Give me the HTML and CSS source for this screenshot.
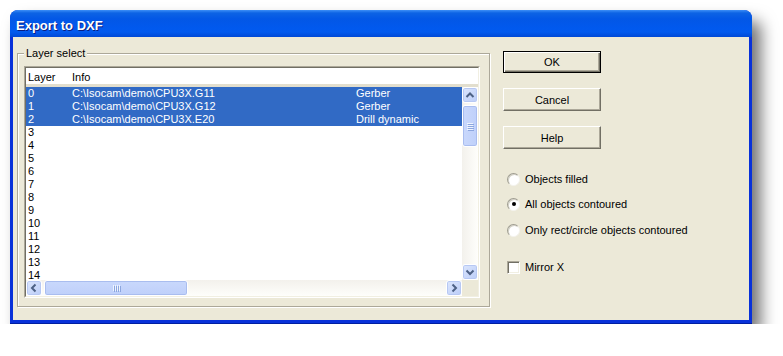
FILE: index.html
```html
<!DOCTYPE html>
<html>
<head>
<meta charset="utf-8">
<link rel="stylesheet" href="styles.css">
</head>
<body>
<div class="window">
  <div class="titlebar"><span class="title">Export to DXF</span></div>
  <div class="client">
    <div class="group">
      <span class="legend">Layer select</span>
      <div class="list">
        <div class="list-inner">
          <div class="header">
            <span class="c1">Layer</span><span class="c2">Info</span>
          </div>
          <div class="body">
            <div class="rows-wrap">
              <div class="rows">
                <div class="row sel"><span class="c1">0</span><span class="c2">C:\Isocam\demo\CPU3X.G11</span><span class="c3">Gerber</span></div>
                <div class="row sel"><span class="c1">1</span><span class="c2">C:\Isocam\demo\CPU3X.G12</span><span class="c3">Gerber</span></div>
                <div class="row sel"><span class="c1">2</span><span class="c2">C:\Isocam\demo\CPU3X.E20</span><span class="c3">Drill dynamic</span></div>
                <div class="row"><span class="c1">3</span></div>
                <div class="row"><span class="c1">4</span></div>
                <div class="row"><span class="c1">5</span></div>
                <div class="row"><span class="c1">6</span></div>
                <div class="row"><span class="c1">7</span></div>
                <div class="row"><span class="c1">8</span></div>
                <div class="row"><span class="c1">9</span></div>
                <div class="row"><span class="c1">10</span></div>
                <div class="row"><span class="c1">11</span></div>
                <div class="row"><span class="c1">12</span></div>
                <div class="row"><span class="c1">13</span></div>
                <div class="row"><span class="c1">14</span></div>
              </div>
              <div class="vscroll">
                <div class="sbtn"><svg width="14" height="14" viewBox="0 0 14 14"><polyline points="3.5,9 7,5.5 10.5,9" fill="none" stroke="#4D6185" stroke-width="2"/></svg></div>
                <div class="vthumb"><span class="grip-h"></span><span class="grip-h"></span><span class="grip-h"></span><span class="grip-h"></span></div>
                <div class="track"></div>
                <div class="sbtn"><svg width="14" height="14" viewBox="0 0 14 14"><polyline points="3.5,5.5 7,9 10.5,5.5" fill="none" stroke="#4D6185" stroke-width="2"/></svg></div>
              </div>
            </div>
            <div class="hscroll">
              <div class="sbtn"><svg width="14" height="14" viewBox="0 0 14 14"><polyline points="8.5,3.5 5,7 8.5,10.5" fill="none" stroke="#4D6185" stroke-width="2"/></svg></div>
              <div class="hthumb"><span class="grip-v"></span><span class="grip-v"></span><span class="grip-v"></span><span class="grip-v"></span></div>
              <div class="track"></div>
              <div class="sbtn"><svg width="14" height="14" viewBox="0 0 14 14"><polyline points="5.5,3.5 9,7 5.5,10.5" fill="none" stroke="#4D6185" stroke-width="2"/></svg></div>
              <div class="corner"></div>
            </div>
          </div>
        </div>
      </div>
    </div>
    <div class="side">
      <div class="btn default">OK</div>
      <div class="btn cancel">Cancel</div>
      <div class="btn help">Help</div>
      <div class="opt r1"><span class="radio"></span><span>Objects filled</span></div>
      <div class="opt r2"><span class="radio on"><span class="dot"></span></span><span>All objects contoured</span></div>
      <div class="opt r3"><span class="radio"></span><span>Only rect/circle objects contoured</span></div>
      <div class="opt cb"><span class="check"></span><span>Mirror X</span></div>
    </div>
  </div>
</div>
</body>
</html>
```

FILE: styles.css
```css
* { box-sizing: border-box; }
html, body { margin: 0; padding: 0; background: #ffffff; }
body {
  font-family: "Liberation Sans", Arial, sans-serif;
  font-size: 11px;
  color: #000;
}
.window {
  margin: 10px 0 0 10px;
  width: 742px;
  height: 314px;
  background: #0831D9;
  border-radius: 8px 8px 0 0;
  padding: 0 3px 3px 3px;
  box-shadow: 9px 11px 16px rgba(0,0,0,0.55);
  border-bottom: 1px solid #001EA0;
}
.titlebar {
  height: 27px;
  margin: 0 -3px;
  border-radius: 8px 8px 0 0;
  background: linear-gradient(#3D8FF7 0px, #0D63E4 3px, #0357E6 9px, #0159EE 18px, #025AEE 22px, #0049D6 27px);
  display: flex;
  align-items: center;
  padding: 3px 0 0 6px;
}
.title {
  color: #fff;
  font-weight: bold;
  font-size: 13px;
  text-shadow: 1px 1px #0A1E80;
}
.client {
  background: #ECE9D8;
  height: 283px;
  display: flex;
  align-items: flex-start;
}
.group {
  position: relative;
  margin: 16px 0 0 4px;
  width: 473px;
  height: 254px;
  border: 1px solid #ACA899;
  box-shadow: inset 1px 1px #fff, 1px 1px #fff;
  padding: 12px 10px 9px 6px;
}
.legend {
  position: absolute;
  left: 6px;
  top: -8px;
  background: #ECE9D8;
  padding: 0 2px;
  line-height: 14px;
}
.list {
  width: 456px;
  height: 232px;
  border: 1px solid;
  border-color: #ACA899 #fff #fff #ACA899;
}
.list-inner {
  width: 100%;
  height: 100%;
  border: 1px solid;
  border-color: #716F64 #F1EFE2 #F1EFE2 #716F64;
  background: #fff;
  display: flex;
  flex-direction: column;
}
.header {
  height: 19px;
  display: flex;
  align-items: center;
  background: #fff;
  border-bottom: 3px solid;
  border-image: linear-gradient(#F1EFE2, #E2DECD) 1;
  padding-top: 1px;
}
.c1 { width: 46px; padding-left: 2px; flex: none; }
.c2 { width: 284px; flex: none; }
.c3 { flex: 1; }
.body { flex: 1; display: flex; flex-direction: column; }
.rows-wrap { flex: 1; display: flex; overflow: hidden; }
.rows { flex: 1; overflow: hidden; height: 193px; }
.row {
  height: 13px;
  line-height: 12px;
  display: flex;
  white-space: nowrap;
}
.row.sel { background: #316AC5; color: #fff; }
.vscroll {
  width: 16px;
  display: flex;
  flex-direction: column;
  background: linear-gradient(90deg, #F3F1EC, #FEFEFB);
}
.hscroll {
  height: 16px;
  display: flex;
  background: linear-gradient(#F3F1EC, #FEFEFB);
}
.track { flex: 1; }
.sbtn {
  width: 16px;
  height: 16px;
  flex: none;
  border: 1px solid #fff;
  border-radius: 3px;
  background: linear-gradient(135deg, #DCE6FD, #BBCDF8);
  box-shadow: inset 0 0 0 1px #B7C8F3;
  display: flex;
  align-items: center;
  justify-content: center;
}
.vthumb, .hthumb {
  flex: none;
  border: 1px solid #fff;
  border-radius: 3px;
  background: linear-gradient(90deg, #C9D8FC, #BFD0FA);
  box-shadow: inset 0 0 0 1px #A9BDEF;
  display: flex;
  align-items: center;
  justify-content: center;
}
.vthumb { height: 42px; margin-top: 2px; flex-direction: column; gap: 1px; }
.hthumb { width: 144px; margin-left: 2px; gap: 1px; background: linear-gradient(#C9D8FC, #BFD0FA); }
.grip-h { display: block; width: 6px; height: 1px; background: #EEF4FE; box-shadow: 1px 1px #8CA6DF; }
.grip-v { display: block; width: 1px; height: 6px; background: #EEF4FE; box-shadow: 1px 1px #8CA6DF; }
.corner { width: 16px; height: 16px; background: #ECE9D8; flex: none; }
.side {
  margin-left: 13px;
  display: flex;
  flex-direction: column;
}
.btn {
  width: 98px;
  height: 22px;
  display: flex;
  align-items: center;
  justify-content: center;
  background: #ECE9D8;
  border: 1px solid;
  border-color: #fff #716F64 #716F64 #fff;
  box-shadow: inset -1px -1px #ACA899;
}
.btn.default {
  margin-top: 14px;
  border: 1px solid #000;
  box-shadow: inset 1px 1px #fff, inset -1px -1px #716F64, inset -2px -2px #ACA899;
}
.btn.cancel { margin-top: 15px; height: 23px; }
.btn.help { margin-top: 15px; height: 23px; }
.opt {
  display: flex;
  align-items: center;
  height: 14px;
  padding-left: 4px;
  gap: 5px;
}
.r1 { margin-top: 23px; }
.r2 { margin-top: 11px; }
.r3 { margin-top: 12px; }
.cb { margin-top: 23px; }
.radio {
  width: 13px;
  height: 13px;
  border-radius: 50%;
  background: #fff;
  border: 1px solid;
  border-color: #9E9C90 #F4F3EE #F4F3EE #9E9C90;
  box-shadow: inset 1px 1px #D3D1C6;
  display: flex;
  align-items: center;
  justify-content: center;
  flex: none;
}
.dot { width: 4px; height: 4px; border-radius: 50%; background: #000; }
.check {
  width: 13px;
  height: 13px;
  background: #fff;
  border: 1px solid;
  border-color: #ACA899 #fff #fff #ACA899;
  box-shadow: inset 1px 1px #716F64, inset -1px -1px #F1EFE2;
  flex: none;
}
```
